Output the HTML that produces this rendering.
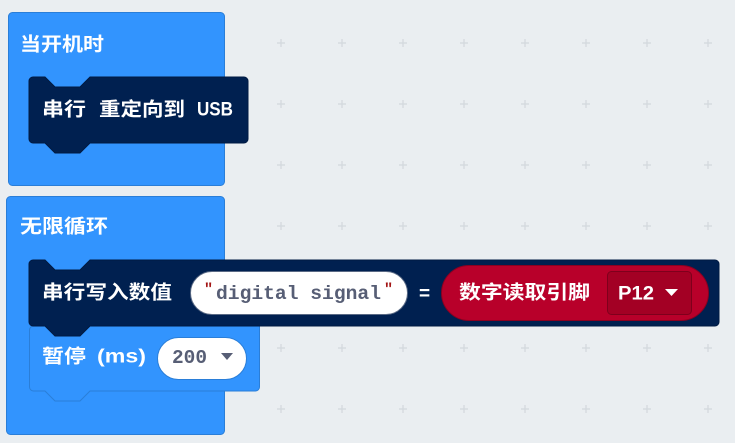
<!DOCTYPE html>
<html><head><meta charset="utf-8"><style>
html,body{margin:0;padding:0;background:#eaeef1;}
svg{display:block}
text{font-family:"Liberation Sans","Noto Sans CJK SC",sans-serif;}
.w{fill:#fff;font-size:19px;font-weight:bold;dominant-baseline:central}
.m{font-family:"Liberation Mono","DejaVu Sans Mono",monospace;}
</style></head><body>
<svg width="735" height="443" viewBox="0 0 735 443" xmlns="http://www.w3.org/2000/svg">
<rect width="735" height="443" fill="#eaeef1"/>
<g stroke="#d2d8dd" stroke-width="1.2">
<path d="M277,43h8M281,39v8M338,43h8M342,39v8M399,43h8M403,39v8M460,43h8M464,39v8M521,43h8M525,39v8M582,43h8M586,39v8M643,43h8M647,39v8M704,43h8M708,39v8
M277,104h8M281,100v8M338,104h8M342,100v8M399,104h8M403,100v8M460,104h8M464,100v8M521,104h8M525,100v8M582,104h8M586,100v8M643,104h8M647,100v8M704,104h8M708,100v8
M277,165h8M281,161v8M338,165h8M342,161v8M399,165h8M403,161v8M460,165h8M464,161v8M521,165h8M525,161v8M582,165h8M586,161v8M643,165h8M647,161v8M704,165h8M708,161v8
M277,226h8M281,222v8M338,226h8M342,222v8M399,226h8M403,222v8M460,226h8M464,222v8M521,226h8M525,222v8M582,226h8M586,222v8M643,226h8M647,222v8M704,226h8M708,222v8
M277,348h8M281,344v8M338,348h8M342,344v8M399,348h8M403,344v8M460,348h8M464,344v8M521,348h8M525,344v8M582,348h8M586,344v8M643,348h8M647,344v8M704,348h8M708,344v8
M277,409h8M281,405v8M338,409h8M342,405v8M399,409h8M403,405v8M460,409h8M464,405v8M521,409h8M525,405v8M582,409h8M586,405v8M643,409h8M647,405v8M704,409h8M708,405v8"/>
</g>

<rect x="8.5" y="12.5" width="216" height="173" rx="4" fill="#3294fe" stroke="#2a7ed8"/>
<text x="20" y="45" class="w" textLength="84" lengthAdjust="spacingAndGlyphs">当开机时</text>
<path d="M29,81a4,4 0 0 1 4,-4H45l10,10H80l10,-10H244a4,4 0 0 1 4,4V139a4,4 0 0 1 -4,4H90l-10,10H55l-10,-10H33a4,4 0 0 1 -4,-4Z" fill="#002050" stroke="#001a42"/>
<text x="42" y="110" class="w" textLength="44" lengthAdjust="spacingAndGlyphs">串行</text>
<text x="99" y="110" class="w" textLength="86" lengthAdjust="spacingAndGlyphs">重定向到</text>
<text x="197" y="110" class="w" textLength="36" lengthAdjust="spacingAndGlyphs">USB</text>

<rect x="6.5" y="196.5" width="218" height="238" rx="4" fill="#3294fe" stroke="#2a7ed8"/>
<text x="20" y="227" class="w" textLength="88" lengthAdjust="spacingAndGlyphs">无限循环</text>

<path d="M29.5,330a4,4 0 0 1 4,-4H259.5V387a4,4 0 0 1 -4,4H90l-10,10H55l-10,-10H33.5a4,4 0 0 1 -4,-4Z" fill="#3294fe" stroke="#2a7ed8"/>
<text x="42" y="357" class="w" textLength="44" lengthAdjust="spacingAndGlyphs">暂停</text>
<text x="97" y="357" class="w" textLength="49" lengthAdjust="spacingAndGlyphs">(ms)</text>
<rect x="157.5" y="337.5" width="89" height="42" rx="21" fill="#fff" stroke="#2a7ed8"/>
<text x="172" y="358" class="w m" style="fill:#575e75;font-size:19px" textLength="35" lengthAdjust="spacingAndGlyphs">200</text>
<path d="M221,353h12l-6,7Z" fill="#575e75"/>

<path d="M29,264a4,4 0 0 1 4,-4H45l10,10H80l10,-10H715a4,4 0 0 1 4,4V322a4,4 0 0 1 -4,4H90l-10,10H55l-10,-10H33a4,4 0 0 1 -4,-4Z" fill="#002050" stroke="#001a42"/>
<text x="42" y="293" class="w" textLength="130" lengthAdjust="spacingAndGlyphs">串行写入数值</text>
<rect x="190.5" y="271.5" width="217" height="43" rx="21.5" fill="#fff" stroke="#5a6a85"/>
<text x="204" y="290" class="w m" style="fill:#a31515;font-size:15px">"</text>
<text x="216" y="294" class="w m" style="fill:#575e75;font-size:19px" textLength="165" lengthAdjust="spacingAndGlyphs">digital signal</text>
<text x="384" y="290" class="w m" style="fill:#a31515;font-size:15px">"</text>
<text x="419" y="294" class="w">=</text>
<rect x="441.5" y="265.5" width="267" height="55" rx="27.5" fill="#b8002a" stroke="#8a0020"/>
<text x="459" y="293" class="w" textLength="131" lengthAdjust="spacingAndGlyphs">数字读取引脚</text>
<rect x="607.5" y="271.5" width="84" height="43" rx="4" fill="#a30024" stroke="#7e001c"/>
<text x="618" y="294" class="w" textLength="36" lengthAdjust="spacingAndGlyphs">P12</text>
<path d="M665,289h13l-6.5,7Z" fill="#fff"/>
</svg>
</body></html>
